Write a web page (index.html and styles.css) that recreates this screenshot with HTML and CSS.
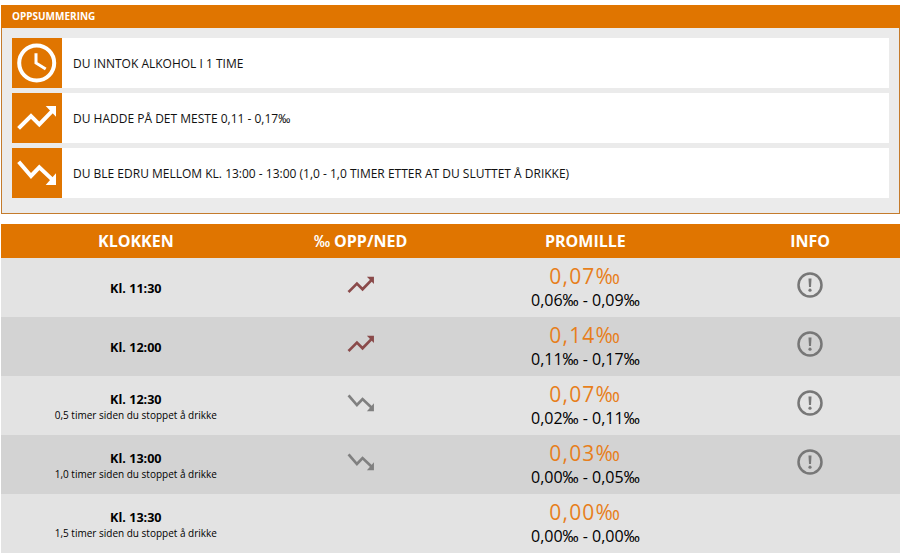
FILE: index.html
```html
<!DOCTYPE html>
<html lang="no">
<head>
<meta charset="utf-8">
<title>Oppsummering</title>
<link rel="stylesheet" href="styles.css">
</head>
<body>
<svg class="defs" width="0" height="0" aria-hidden="true">
  <symbol id="up" viewBox="0 0 50 50"><path class="tr-line" d="M8 34 19 23l8.300 8.300L39.700 18.500"/><path class="tr-head" d="M33.700 13H44V23.700Z"/></symbol>
  <symbol id="down" viewBox="0 0 50 50"><path class="tr-line" d="M8 15.300 19 28l8.300-8.700L39.700 31"/><path class="tr-head" d="M33.700 37H44V25.300Z"/></symbol>
  <symbol id="info" viewBox="0 0 26 26"><circle class="info-ring" cx="13" cy="13" r="11.500"/><path class="info-bar" d="M11.500 6.500h3l-.5 8.500h-2Z"/><circle class="info-dot" cx="13" cy="18.200" r="1.600"/></symbol>
</svg>
<main class="page">
  <section class="summary">
    <h2 class="summary-title">OPPSUMMERING</h2>
    <div class="summary-body">
      <div class="summary-item">
        <div class="tile">
          <svg class="tile-icon" viewBox="0 0 50 50"><circle class="clock-ring" cx="24.700" cy="25" r="17.500"/><path class="clock-hands" d="M24 15.300V25L33.700 31"/></svg>
        </div>
        <p class="summary-text">DU INNTOK ALKOHOL I 1 TIME</p>
      </div>
      <div class="summary-item">
        <div class="tile"><svg class="tile-icon light"><use href="#up"/></svg></div>
        <p class="summary-text">DU HADDE PÅ DET MESTE 0,11 - 0,17<span class="pm">‰</span></p>
      </div>
      <div class="summary-item">
        <div class="tile"><svg class="tile-icon light"><use href="#down"/></svg></div>
        <p class="summary-text">DU BLE EDRU MELLOM KL. 13:00 - 13:00 (1,0 - 1,0 TIMER ETTER AT DU SLUTTET Å DRIKKE)</p>
      </div>
    </div>
  </section>

  <section class="table">
    <div class="row head">
      <div>KLOKKEN</div><div><span><span class="pm">‰</span> OPP/NED</span></div><div>PROMILLE</div><div>INFO</div>
    </div>
    <div class="row">
      <div class="time"><strong>Kl. 11:30</strong></div>
      <div><svg class="trend rising"><use href="#up"/></svg></div>
      <div class="prom"><span class="digital">0,07‰</span><span class="range">0,06<span class="pm">‰</span> - 0,09<span class="pm">‰</span></span></div>
      <div><svg class="info"><use href="#info"/></svg></div>
    </div>
    <div class="row alt">
      <div class="time"><strong>Kl. 12:00</strong></div>
      <div><svg class="trend rising"><use href="#up"/></svg></div>
      <div class="prom"><span class="digital">0,14‰</span><span class="range">0,11<span class="pm">‰</span> - 0,17<span class="pm">‰</span></span></div>
      <div><svg class="info"><use href="#info"/></svg></div>
    </div>
    <div class="row">
      <div class="time"><strong>Kl. 12:30</strong><small>0,5 timer siden du stoppet å drikke</small></div>
      <div><svg class="trend falling"><use href="#down"/></svg></div>
      <div class="prom"><span class="digital">0,07‰</span><span class="range">0,02<span class="pm">‰</span> - 0,11<span class="pm">‰</span></span></div>
      <div><svg class="info"><use href="#info"/></svg></div>
    </div>
    <div class="row alt">
      <div class="time"><strong>Kl. 13:00</strong><small>1,0 timer siden du stoppet å drikke</small></div>
      <div><svg class="trend falling"><use href="#down"/></svg></div>
      <div class="prom"><span class="digital">0,03‰</span><span class="range">0,00<span class="pm">‰</span> - 0,05<span class="pm">‰</span></span></div>
      <div><svg class="info"><use href="#info"/></svg></div>
    </div>
    <div class="row">
      <div class="time"><strong>Kl. 13:30</strong><small>1,5 timer siden du stoppet å drikke</small></div>
      <div></div>
      <div class="prom"><span class="digital">0,00‰</span><span class="range">0,00<span class="pm">‰</span> - 0,00<span class="pm">‰</span></span></div>
      <div></div>
    </div>
  </section>
</main>
</body>
</html>
```
FILE: styles.css
```css
html, body { margin: 0; background: #fff; }
body { font-family: "Open Sans", "Liberation Sans", sans-serif; color: #000; overflow: hidden; }
.defs { display: block; height: 0; }
.page { width: 899px; margin: 5px 0 0 1px; }
.pm { font-family: "Liberation Sans", sans-serif; }

.summary { border: 1px solid #c47b2c; border-top: 0; background: #ebebeb; height: 209px; box-sizing: border-box; }
.summary-title { margin: 0 -1px; background: #e07500; color: #fff; height: 23px; line-height: 23px; font-size: 10px; font-weight: 700; padding-left: 11px; }
.summary-body { display: flex; flex-direction: column; gap: 5px; padding: 10px 10px 0; }
.summary-item { display: flex; align-items: center; background: #fff; height: 50px; }
.tile { width: 50px; height: 50px; background: #e07500; flex: none; }
.tile-icon { display: block; width: 50px; height: 50px; }
.summary-text { margin: 0 0 0 11px; font-size: 12px; color: #111; }

.clock-ring { fill: none; stroke: #fff; stroke-width: 4; }
.clock-hands { fill: none; stroke: #fff; stroke-width: 3; }
.tr-line { fill: none; stroke: currentColor; stroke-width: 4; stroke-linecap: square; }
.tr-head { fill: currentColor; }
.light { color: #fff; }

.table { margin-top: 10px; }
.row { display: grid; grid-template-columns: 3fr 2fr 3fr 2fr; height: 59px; background: #e3e3e3; }
.row > div { display: flex; flex-direction: column; align-items: center; justify-content: center; text-align: center; box-sizing: border-box; }
.alt { background: #d3d3d3; }
.head { height: 34px; background: #e07500; color: #fff; font-size: 16px; font-weight: 700; }

.row > .time { padding-top: 2px; }
.time strong { font-size: 12.600px; font-weight: 700; line-height: 17px; }
.time small { font-size: 10px; line-height: 14px; color: #000; }

.trend { width: 34px; height: 34px; display: block; margin-bottom: 6px; }
.rising { color: #8a4a4a; }
.falling { color: #808080; }

.info { width: 26px; height: 26px; display: block; margin-bottom: 5px; }
.info-ring { fill: none; stroke: #777; stroke-width: 2.5; }
.info-bar, .info-dot { fill: #777; }

.row > .prom { line-height: 1; padding-top: 2px; }
.digital { font-family: "Open Sans", sans-serif; font-size: 21px; font-weight: 400; letter-spacing: 1.200px; color: #e77f1c; line-height: 24px; height: 24px; margin-top: -1px; }
.range { font-size: 16px; line-height: 22px; color: #000; margin-top: 1px; }
```
